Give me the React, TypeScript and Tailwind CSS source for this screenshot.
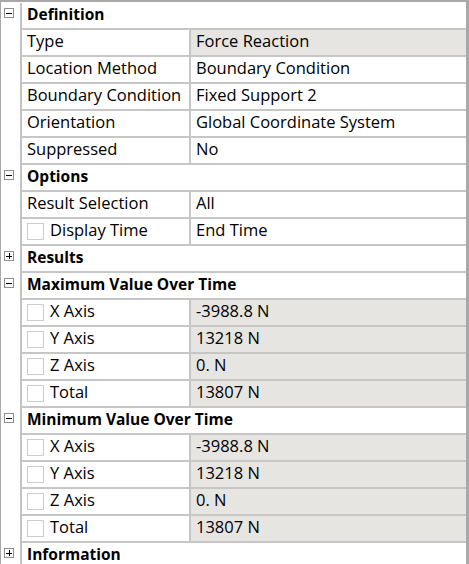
import React from 'react';

type Prop = {
  name: string;
  value: string;
  readOnly?: boolean;
  check?: boolean;
};

type Section = {
  title: string;
  open: boolean;
  props: Prop[];
};

const sections: Section[] = [
  {
    title: 'Definition',
    open: true,
    props: [
      { name: 'Type', value: 'Force Reaction', readOnly: true },
      { name: 'Location Method', value: 'Boundary Condition' },
      { name: 'Boundary Condition', value: 'Fixed Support 2' },
      { name: 'Orientation', value: 'Global Coordinate System' },
      { name: 'Suppressed', value: 'No' },
    ],
  },
  {
    title: 'Options',
    open: true,
    props: [
      { name: 'Result Selection', value: 'All' },
      { name: 'Display Time', value: 'End Time', check: true },
    ],
  },
  { title: 'Results', open: false, props: [] },
  {
    title: 'Maximum Value Over Time',
    open: true,
    props: [
      { name: 'X Axis', value: '-3988.8 N', readOnly: true, check: true },
      { name: 'Y Axis', value: '13218 N', readOnly: true, check: true },
      { name: 'Z Axis', value: '0. N', readOnly: true, check: true },
      { name: 'Total', value: '13807 N', readOnly: true, check: true },
    ],
  },
  {
    title: 'Minimum Value Over Time',
    open: true,
    props: [
      { name: 'X Axis', value: '-3988.8 N', readOnly: true, check: true },
      { name: 'Y Axis', value: '13218 N', readOnly: true, check: true },
      { name: 'Z Axis', value: '0. N', readOnly: true, check: true },
      { name: 'Total', value: '13807 N', readOnly: true, check: true },
    ],
  },
  { title: 'Information', open: false, props: [] },
];

// small +/- toggle in the left gutter
const ExpandBox = ({ open }: { open: boolean }) => (
  <div className="relative w-[10px] h-[10px] border border-[#8f8f8f] bg-white">
    <div className="absolute left-[1px] top-[3.5px] w-[6px] h-px bg-black" />
    {!open && <div className="absolute left-[3.5px] top-[1px] w-px h-[6px] bg-black" />}
  </div>
);

const Gutter = ({ children }: { children?: React.ReactNode }) => (
  <div className="w-[21px] shrink-0 pl-[3px] pt-[5px] border-r-2 border-[#c3c3c3] bg-white">
    {children}
  </div>
);

const HeaderRow = ({ title, open }: { title: string; open: boolean }) => (
  <div className="flex h-[27px]">
    <Gutter>
      <ExpandBox open={open} />
    </Gutter>
    <div className="flex-1 flex items-center pl-[5px] pb-[2px] border-b-2 border-[#c6c6c6] font-bold text-[15.5px]">
      {title}
    </div>
  </div>
);

const PropRow = ({ prop }: { prop: Prop }) => (
  <div className="flex h-[27px]">
    <Gutter />
    <div className="flex-1 flex border-b-2 border-[#c6c6c6]">
      <div className="w-[169px] shrink-0 flex items-center pl-[5px] border-r-2 border-[#c6c6c6] bg-white">
        {prop.check && (
          <div className="w-[17px] h-[17px] mr-[6px] border border-[#cbcbcb] bg-white shrink-0" />
        )}
        <span className="pb-[3px]">{prop.name}</span>
      </div>
      <div
        className={`flex-1 flex items-center pl-[5px] pb-[3px] ${
          prop.readOnly ? 'bg-[#e6e5e2]' : 'bg-white'
        }`}
      >
        {prop.value}
      </div>
    </div>
  </div>
);

export default function App() {
  return (
    <div className="w-[469px] h-[564px] overflow-hidden bg-white">
      <div
        className="h-full border-l border-t-2 border-r-[3px] border-[#a8a8a8] pt-px text-[16.5px] text-black leading-none"
        style={{ fontFamily: '"Open Sans", "Noto Sans", sans-serif' }}
      >
        {sections.map((s) => (
          <React.Fragment key={s.title}>
            <HeaderRow title={s.title} open={s.open} />
            {s.props.map((p, i) => (
              <PropRow key={s.title + i} prop={p} />
            ))}
          </React.Fragment>
        ))}
      </div>
    </div>
  );
}
